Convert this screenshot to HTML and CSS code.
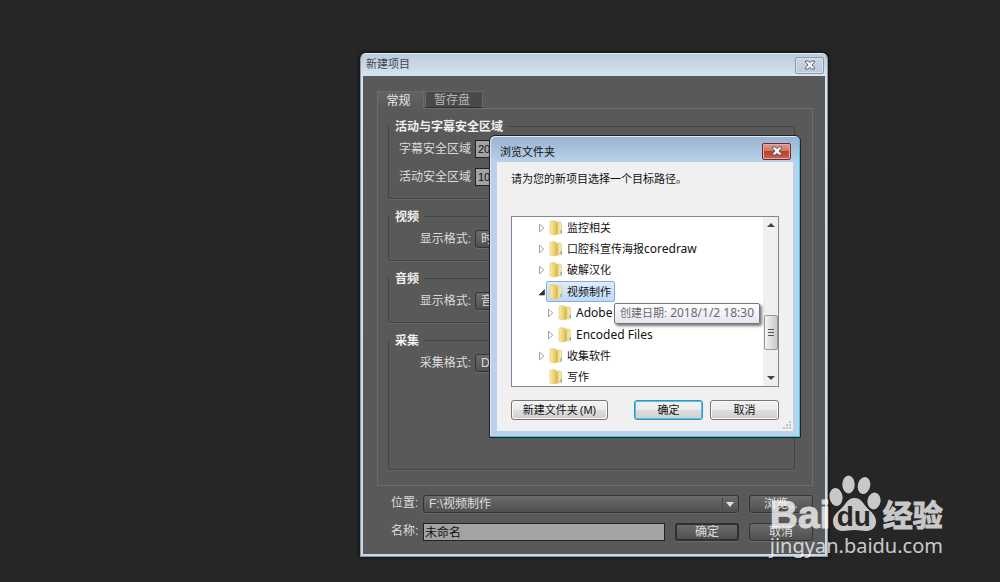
FILE: index.html
```html
<!DOCTYPE html>
<html lang="zh-CN">
<head>
  <meta charset="UTF-8">
  <title>新建项目</title>
  <link rel="stylesheet" href="styles.css">
</head>
<body>
  <svg width="0" height="0" class="defs">
    <defs>
      <linearGradient id="gold" x1="0" x2="1">
        <stop offset="0" stop-color="#f9efb2"/>
        <stop offset="1" stop-color="#e3c65c"/>
      </linearGradient>
      <linearGradient id="gold-light" x1="0" x2="1">
        <stop offset="0" stop-color="#e6cf70"/>
        <stop offset="1" stop-color="#f8edb0"/>
      </linearGradient>
      <symbol id="folder" viewBox="0 0 14 16">
        <path d="M6 2h5.500l1 1v11H6z" fill="url(#gold-light)" stroke="#d8bd5c" stroke-width=".5"/>
        <path d="M1 1.500l1-.7h4l1 1v12.700L6 15l-5-1z" fill="url(#gold)" stroke="#d9bd55" stroke-width=".5"/>
        <path d="M7 4l2-1.500v11L7 15z" fill="#dcbf54"/>
        <path d="M11.500 10h1.500v3h-1.500z" fill="#69b5c9"/>
      </symbol>
      <symbol id="closed" viewBox="0 0 8 10">
        <path d="M1.500 1.200L5.800 5 1.500 8.800z" fill="#fff" stroke="#a2a2a2"/>
      </symbol>
      <symbol id="opened" viewBox="0 0 8 10">
        <path d="M6.500 2.500v5.500H1z" fill="#333" stroke="#222" stroke-width=".6"/>
      </symbol>
      <symbol id="cross" viewBox="0 0 12 10">
        <path d="M1.500 1h3L6 2.700 7.500 1h3v1.300L8 5l2.500 2.700V9h-3L6 7.300 4.500 9h-3V7.700L4 5 1.500 2.300z" fill="#f4f4f4" stroke="#4e5666" stroke-width=".9"/>
      </symbol>
    </defs>
  </svg>

  <div class="desktop">
    <section class="project">
      <header class="project-title">
        <h1>新建项目</h1>
        <button class="close" aria-label="关闭"><svg width="12" height="10"><use href="#cross"/></svg></button>
      </header>

      <form class="project-body">
        <div class="tabs">
          <button type="button" class="tab active">常规</button>
          <button type="button" class="tab">暂存盘</button>
        </div>

        <div class="panel">
          <fieldset>
            <legend>活动与字幕安全区域</legend>
            <div class="row">
              <label for="title-safe">字幕安全区域</label>
              <input id="title-safe" class="number" type="text" value="20">
            </div>
            <div class="row">
              <label for="action-safe">活动安全区域</label>
              <input id="action-safe" class="number" type="text" value="10">
            </div>
          </fieldset>
          <fieldset>
            <legend>视频</legend>
            <div class="row">
              <label for="video-format">显示格式:</label>
              <select id="video-format" class="dark"><option>时间码</option></select>
            </div>
          </fieldset>
          <fieldset>
            <legend>音频</legend>
            <div class="row">
              <label for="audio-format">显示格式:</label>
              <select id="audio-format" class="dark"><option>音频采样</option></select>
            </div>
          </fieldset>
          <fieldset class="capture">
            <legend>采集</legend>
            <div class="row">
              <label for="capture-format">采集格式:</label>
              <select id="capture-format" class="dark"><option>DV</option></select>
            </div>
          </fieldset>
        </div>

        <div class="footer-row">
          <label for="location">位置:</label>
          <div class="select-wrap">
            <select id="location" class="dark"><option>F:\视频制作</option></select>
          </div>
          <button type="button" class="dark">浏览...</button>
        </div>
        <div class="footer-row">
          <label for="name">名称:</label>
          <input id="name" type="text" value="未命名">
          <button type="button" class="dark default">确定</button>
          <button type="button" class="dark">取消</button>
        </div>
      </form>
    </section>

    <section class="browse">
      <header class="browse-title">
        <h2>浏览文件夹</h2>
        <button class="close red" aria-label="关闭"><svg width="12" height="10"><use href="#cross"/></svg></button>
      </header>
      <div class="browse-body">
        <p>请为您的新项目选择一个目标路径。</p>
        <div class="tree-box">
          <ul class="tree">
            <li><svg class="arrow"><use href="#closed"/></svg><svg class="folder"><use href="#folder"/></svg><span class="name">监控相关</span></li>
            <li><svg class="arrow"><use href="#closed"/></svg><svg class="folder"><use href="#folder"/></svg><span class="name">口腔科宣传海报<span class="latin">coredraw</span></span></li>
            <li><svg class="arrow"><use href="#closed"/></svg><svg class="folder"><use href="#folder"/></svg><span class="name">破解汉化</span></li>
            <li>
              <svg class="arrow"><use href="#opened"/></svg>
              <span class="selected"><svg class="folder"><use href="#folder"/></svg><span class="name">视频制作</span></span>
              <span class="tooltip">创建日期: <span class="latin">2018/1/2 18:30</span></span>
            </li>
            <li class="child"><svg class="arrow"><use href="#closed"/></svg><svg class="folder"><use href="#folder"/></svg><span class="name latin">Adobe</span></li>
            <li class="child"><svg class="arrow"><use href="#closed"/></svg><svg class="folder"><use href="#folder"/></svg><span class="name latin">Encoded Files</span></li>
            <li><svg class="arrow"><use href="#closed"/></svg><svg class="folder"><use href="#folder"/></svg><span class="name">收集软件</span></li>
            <li><svg class="arrow"></svg><svg class="folder"><use href="#folder"/></svg><span class="name">写作</span></li>
          </ul>
          <div class="scrollbar">
            <button aria-label="向上"><svg width="8" height="5"><path d="M4 0l4 4H0z" fill="#444"/></svg></button>
            <div class="thumb"><i></i><i></i><i></i></div>
            <button aria-label="向下"><svg width="8" height="5"><path d="M0 0h8L4 4z" fill="#444"/></svg></button>
          </div>
        </div>
        <div class="buttons">
          <button class="light new-folder">新建文件夹<span class="key">(M)</span></button>
          <button class="light focus">确定</button>
          <button class="light">取消</button>
        </div>
        <svg class="grip" width="8" height="8" fill="#c4c4c4">
          <path d="M6 0h2v2H6zM3 3h2v2H3zM6 3h2v2H6zM0 6h2v2H0zM3 6h2v2H3zM6 6h2v2H6z"/>
        </svg>
      </div>
    </section>

    <div class="watermark">
      <div class="brand">
        <span class="bai">Bai</span>
        <span class="paw">
          <svg width="52" height="57" viewBox="0 0 52 57" fill="currentColor">
            <ellipse cx="7" cy="22" rx="6.500" ry="9" transform="rotate(-8 7 22)"/>
            <ellipse cx="19.500" cy="9.500" rx="6.200" ry="9"/>
            <ellipse cx="35" cy="10.500" rx="6.200" ry="8.500" transform="rotate(14 35 10.500)"/>
            <ellipse cx="45" cy="26" rx="6.500" ry="8.500" transform="rotate(10 45 26)"/>
            <path d="M25.500 23c5 0 8 3.500 10.500 7.500 3.500 5 10.500 8 11 15.500.4 6-4 10-9.500 10-4.500 0-7-1-12-1s-7.500 1-12 1C8 56 4 52 4 46c.2-7 7-10.500 11-15.500 3-4 5.500-7.500 10.500-7.500z"/>
          </svg>
          <span class="du">du</span>
        </span>
        <span class="jingyan">经验</span>
      </div>
      <div class="url">jingyan.baidu.com</div>
    </div>
  </div>
</body>
</html>
```

FILE: styles.css
```css
* {
  box-sizing: border-box;
}

html, body {
  margin: 0;
  height: 100%;
  background: #262626;
  font-family: "Liberation Sans", "Noto Sans CJK SC", sans-serif;
  font-size: 12px;
  overflow: hidden;
}

button, input, select {
  font: inherit;
  margin: 0;
  padding: 0;
}

h1, h2, p, ul {
  margin: 0;
  padding: 0;
  font-weight: normal;
  list-style: none;
}

.defs {
  position: absolute;
}

.desktop {
  position: relative;
  min-height: 100%;
}

/* project window */
.project {
  position: absolute;
  left: 360px;
  top: 53px;
  width: 468px;
  padding: 0 2px 2px;
  background: linear-gradient(#bccbdb, #d6e3f1 22px, #c9d7e8);
  border: 1px solid #8d98a5;
  border-top-color: #e8eef4;
  border-radius: 6px 6px 0 0;
  box-shadow: 0 0 3px 1px #111;
}

.project-title {
  display: flex;
  justify-content: space-between;
  align-items: center;
  height: 22px;
  padding: 0 1px 0 3px;
}

.project-title h1 {
  font-size: 11px;
  line-height: 20px;
  margin-bottom: 2px;
  color: #3f4750;
}

.close {
  display: flex;
  align-items: center;
  justify-content: center;
  width: 29px;
  height: 17px;
  border: 1px solid #8a98ad;
  border-radius: 2px;
  background: linear-gradient(#c9d5e3, #bccadb);
  box-shadow: inset 0 0 0 1px #d9e3ee;
}

.project-body {
  padding: 15px 12px 13px 14px;
  background: #595959;
  color: #dcdcdc;
}

.tabs {
  display: flex;
  gap: 1px;
}

.tab {
  width: 58px;
  height: 17px;
  padding-right: 4px;
  border: 1px solid #6a6a6a;
  border-bottom-color: #2d2d2d;
  background: #494949;
  color: #b4b4b4;
  line-height: 14px;
}

.tab.active {
  width: 47px;
  height: 18px;
  margin-bottom: -1px;
  border-bottom: 0;
  background: linear-gradient(#636363, #595959);
  color: #e6e6e6;
  z-index: 1;
}

.panel {
  display: flex;
  flex-direction: column;
  gap: 10px;
  padding: 10px 17px 15px 10px;
  border: 1px solid #6c6c6c;
}

fieldset {
  margin: 0;
  padding: 1px 0 7px;
  border: 1px solid #454545;
  border-radius: 2px;
  box-shadow: 0 1px #666;
  min-width: 0;
}

.capture {
  min-height: 137px;
}

legend {
  margin-left: 1px;
  padding: 1px 5px 0;
  font-weight: bold;
  line-height: 14px;
  color: #f0f0f0;
}

.row {
  display: flex;
  align-items: center;
  gap: 4px;
  height: 28px;
}

.row label {
  width: 82px;
  text-align: right;
  line-height: 16px;
  padding-bottom: 1px;
}

.number, #name {
  height: 18px;
  border: 1px solid #222;
  background: #a3a3a3;
  color: #111;
}

.number {
  width: 42px;
  padding-left: 2px;
  font-size: 11px;
}

select.dark, button.dark {
  height: 18px;
  border: 1px solid #343434;
  border-radius: 3px;
  background: linear-gradient(#6b6b6b, #505050);
  box-shadow: 0 1px #6a6a6a;
  color: #dedede;
  line-height: 14px;
}

select.dark {
  appearance: none;
  width: 160px;
  padding-left: 5px;
}

.footer-row {
  display: flex;
  align-items: center;
  gap: 10px;
  height: 18px;
  margin-top: 9px;
}

.footer-row + .footer-row {
  margin-top: 10px;
}

.footer-row label {
  width: 36px;
  padding: 0 0 2px 14px;
  line-height: 16px;
  white-space: nowrap;
}

.footer-row button.dark {
  width: 64px;
}

.footer-row button.default {
  border: 2px solid #303030;
  line-height: 12px;
}

.select-wrap {
  flex: 1;
  position: relative;
}

.select-wrap select {
  display: block;
  width: 100%;
}

.select-wrap::before {
  content: "";
  position: absolute;
  right: 16px;
  top: 3px;
  width: 1px;
  height: 12px;
  background: #464646;
}

.select-wrap::after {
  content: "";
  position: absolute;
  right: 5px;
  top: 7px;
  border: 4px solid transparent;
  border-top: 5px solid #e0e0e0;
  border-bottom: 0;
}

#name {
  flex: 1;
  min-width: 0;
  padding: 0 0 2px 1px;
}

/* folder dialog */
.browse {
  position: absolute;
  left: 489px;
  top: 135px;
  width: 312px;
  padding: 0 7px 6px;
  border: 1px solid #222;
  border-radius: 6px 6px 0 0;
  background: linear-gradient(#98b3d1, #b9d1ea 26px);
  box-shadow: inset -1px -1px #38c8e4, inset 1px 1px #dce9f6;
  font-size: 11px;
  color: #111;
}

.browse-title {
  display: flex;
  justify-content: space-between;
  align-items: center;
  height: 26px;
  padding: 4px 2px 0 3px;
}

.browse-title h2 {
  font-size: 11px;
}

.close.red {
  border-color: #6d2a35;
  background: linear-gradient(#dc9a8c, #cf7765 45%, #b8402b 50%, #cb6350);
  box-shadow: inset 0 0 0 1px #e5aa9f;
}

.browse-body {
  position: relative;
  padding: 8px 14px 11px;
  background: #f0f0f0;
}

.browse-body p {
  line-height: 18px;
  margin-bottom: 28px;
}

.tree-box {
  display: flex;
  height: 171px;
  border: 1px solid #828790;
  background: #fff;
  overflow: hidden;
}

.tree {
  flex: 1;
  display: grid;
  grid-auto-rows: 1fr;
  height: 171px;
}

.tree li {
  position: relative;
  display: flex;
  align-items: center;
  padding-left: 26px;
  white-space: nowrap;
}

.tree .child {
  padding-left: 35px;
}

.arrow {
  width: 8px;
  height: 10px;
  margin-right: 3px;
}

.folder {
  width: 14px;
  height: 16px;
  margin-right: 4px;
}

.latin {
  font-family: "Noto Sans", sans-serif;
  font-size: 12px;
}

.name, .selected {
  line-height: 18px;
}

.selected {
  display: flex;
  align-items: center;
  height: 21px;
  margin-left: -3px;
  padding: 0 3px 0 2px;
  border: 1px solid #84acdd;
  border-radius: 2px;
  background: linear-gradient(#dfecfc, #bfd9fa);
}

.tooltip {
  position: absolute;
  left: 102px;
  top: 100%;
  z-index: 1;
  height: 21px;
  padding: 0 5px;
  border: 1px solid #767676;
  border-radius: 2px;
  background: linear-gradient(#fff, #e4e5f0);
  box-shadow: 2px 2px 3px #777;
  line-height: 18px;
  color: #6a6a6a;
}

.scrollbar {
  display: flex;
  flex-direction: column;
  align-items: center;
  width: 15px;
  background: #f0f0f0;
}

.scrollbar button {
  display: flex;
  align-items: center;
  justify-content: center;
  width: 15px;
  height: 16px;
  border: 0;
  background: none;
}

.thumb {
  display: flex;
  flex-direction: column;
  align-items: center;
  justify-content: center;
  gap: 2px;
  width: 14px;
  height: 35px;
  margin: auto 0 20px;
  border: 1px solid #979797;
  border-radius: 2px;
  background: linear-gradient(90deg, #f4f4f4, #c9c9c9);
}

.thumb i {
  width: 6px;
  height: 1px;
  background: #555;
}

.buttons {
  display: flex;
  gap: 7px;
  margin-top: 13px;
}

.light {
  width: 69px;
  height: 20px;
  border: 1px solid #767676;
  border-radius: 3px;
  background: linear-gradient(#f2f2f2, #ebebeb 50%, #dddddd 51%, #cfcfcf);
  box-shadow: inset 0 0 0 1px #fafafa;
  color: #111;
  line-height: 16px;
}

.new-folder {
  width: 97px;
  margin-right: auto;
}

.key {
  margin-left: 2px;
}

.focus {
  border-color: #3c8fb4;
  box-shadow: inset 0 0 0 1px #4cc5ec;
}

.grip {
  position: absolute;
  right: 2px;
  bottom: 2px;
}

/* watermark */
.watermark {
  position: absolute;
  right: 57px;
  bottom: 22px;
  color: #fff;
  opacity: 0.75;
}

.brand {
  display: flex;
  align-items: flex-end;
  height: 57px;
  font-weight: bold;
}

.bai {
  width: 59px;
  font-size: 39px;
  line-height: 34px;
  -webkit-text-stroke: 1px;
}

.paw {
  position: relative;
  display: flex;
  width: 54px;
}

.du {
  position: absolute;
  left: 8px;
  bottom: 0;
  color: #262626;
  font-size: 28px;
  line-height: 30px;
}

.jingyan {
  font-size: 30px;
  line-height: 32px;
  -webkit-text-stroke: 1px;
}

.url {
  font-family: "Noto Sans", sans-serif;
  font-size: 20px;
  line-height: 28px;
}
```
